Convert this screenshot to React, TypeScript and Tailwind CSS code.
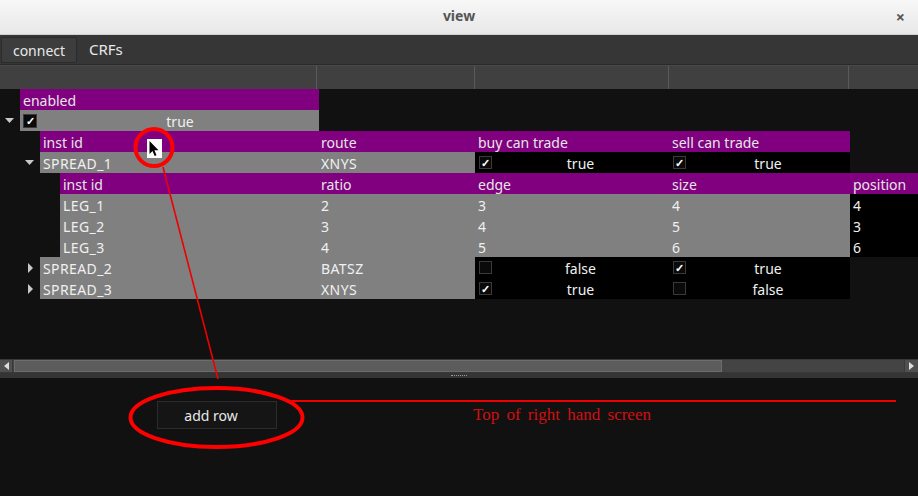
import React from "react";

const font = { fontFamily: '"Noto Sans", "Open Sans", sans-serif' };

const Arrow = ({ open }: { open: boolean }) =>
  open ? (
    <svg width="9" height="6" viewBox="0 0 9 6">
      <polygon points="0,0 9,0 4.5,5" fill="#c8c8c8" />
    </svg>
  ) : (
    <svg width="6" height="10" viewBox="0 0 6 10">
      <polygon points="0,0 5,5 0,10" fill="#c8c8c8" />
    </svg>
  );

const Check = ({ on, size = 13 }: { on: boolean; size?: number }) => (
  <div
    className="shrink-0 flex items-center justify-center bg-[#0a0a0a] border border-[#3a3a3a] text-white text-[11px] font-bold leading-none"
    style={{ width: size, height: size }}
  >
    {on ? "✓" : ""}
  </div>
);

const Head = ({ w, children }: { w: number; children: React.ReactNode }) => (
  <div
    className="h-full bg-[#800080] text-[#e6e6e6] pl-[3px] pt-[1px] flex items-center shrink-0"
    style={{ width: w }}
  >
    {children}
  </div>
);

const Cell = ({ w, children, dark }: { w: number; children?: React.ReactNode; dark?: boolean }) => (
  <div
    className={`h-full pl-[3px] pt-[2px] flex items-center shrink-0 text-[#f0f0f0] tracking-[0.4px] ${dark ? "bg-black" : "bg-[#808080]"}`}
    style={{ width: w }}
  >
    {children}
  </div>
);

const Bool = ({ w, on }: { w: number; on: boolean }) => (
  <div className="h-full bg-black flex items-center pl-[4px] shrink-0" style={{ width: w }}>
    <Check on={on} />
    <span className="flex-1 text-center text-[#f0f0f0] pt-[2px]">{on ? "true" : "false"}</span>
  </div>
);

const Row = ({ indent, arrow, children }: { indent: number; arrow?: "open" | "closed"; children: React.ReactNode }) => (
  <div className="h-[21px] flex">
    <div className="shrink-0 h-full flex items-center justify-end pr-[6px]" style={{ width: indent }}>
      {arrow && <Arrow open={arrow === "open"} />}
    </div>
    {children}
  </div>
);

const legs = [
  ["LEG_1", "2", "3", "4", "4"],
  ["LEG_2", "3", "4", "5", "3"],
  ["LEG_3", "4", "5", "6", "6"],
];

export default function App() {
  return (
    <div className="relative w-[918px] h-[496px] flex flex-col bg-[#111111] overflow-hidden text-[14px]" style={font}>
      {/* title bar */}
      <div className="h-[35px] shrink-0 bg-gradient-to-b from-[#f7f7f7] to-[#e8e8e8] border-b border-[#d0d0d0] flex items-center justify-center relative pb-[3px]">
        <span className="font-bold text-[#555] text-[14px]">view</span>
        <span className="absolute right-[13px] top-[5px] text-[#555] font-bold text-[16px]">×</span>
      </div>

      {/* toolbar */}
      <div className="h-[30px] shrink-0 bg-[#363636] flex items-center border-b border-[#2a2a2a]">
        <button className="ml-[1px] h-[26px] w-[76px] bg-[#3d3d3d] border border-[#2b2b2b] rounded-[2px] text-[14px] text-[#e8e8e8] pt-[2px]">
          connect
        </button>
        <span className="ml-[12px] text-[15px] text-[#e8e8e8]">CRFs</span>
      </div>

      {/* column header */}
      <div className="h-[24px] shrink-0 bg-[#404040] border-t border-[#4a4a4a] flex">
        <div className="w-[317px] h-full border-r border-[#5a5a5a]" />
        <div className="w-[158px] h-full border-r border-[#5a5a5a]" />
        <div className="w-[194px] h-full border-r border-[#5a5a5a]" />
        <div className="w-[180px] h-full border-r border-[#5a5a5a]" />
        <div className="flex-1" />
      </div>

      {/* tree */}
      <div className="h-[270px] shrink-0 overflow-hidden">
        <Row indent={20}>
          <Head w={299}>enabled</Head>
        </Row>
        <Row indent={20} arrow="open">
          <div className="w-[299px] h-full bg-[#808080] flex items-center pl-[3px]">
            <Check on size={14} />
            <span className="flex-1 text-center text-[#f0f0f0] pt-[2px] pl-[4px]">true</span>
          </div>
        </Row>
        <Row indent={40}>
          <Head w={278}>inst id</Head>
          <Head w={157}>route</Head>
          <Head w={194}>buy can trade</Head>
          <Head w={181}>sell can trade</Head>
        </Row>
        <Row indent={40} arrow="open">
          <Cell w={278}>SPREAD_1</Cell>
          <Cell w={157}>XNYS</Cell>
          <Bool w={194} on />
          <Bool w={181} on />
        </Row>
        <Row indent={60}>
          <Head w={258}>inst id</Head>
          <Head w={157}>ratio</Head>
          <Head w={194}>edge</Head>
          <Head w={181}>size</Head>
          <Head w={68}>position</Head>
        </Row>
        {legs.map((l) => (
          <Row indent={60} key={l[0]}>
            <Cell w={258}>{l[0]}</Cell>
            <Cell w={157}>{l[1]}</Cell>
            <Cell w={194}>{l[2]}</Cell>
            <Cell w={181}>{l[3]}</Cell>
            <Cell w={68} dark>
              {l[4]}
            </Cell>
          </Row>
        ))}
        <Row indent={40} arrow="closed">
          <Cell w={278}>SPREAD_2</Cell>
          <Cell w={157}>BATSZ</Cell>
          <Bool w={194} on={false} />
          <Bool w={181} on />
        </Row>
        <Row indent={40} arrow="closed">
          <Cell w={278}>SPREAD_3</Cell>
          <Cell w={157}>XNYS</Cell>
          <Bool w={194} on />
          <Bool w={181} on={false} />
        </Row>
      </div>

      {/* horizontal scrollbar */}
      <div className="h-[14px] shrink-0 bg-[#444] border-y border-[#383838] flex items-stretch">
        <div className="w-[13px] bg-[#505050] border-r border-[#3a3a3a] flex items-center justify-center">
          <svg width="5" height="8" viewBox="0 0 5 8">
            <polygon points="5,0 0,4 5,8" fill="#ddd" />
          </svg>
        </div>
        <div className="w-[708px] ml-[1px] bg-[#5c5c5c] border border-[#6c6c6c]" />
        <div className="flex-1" />
        <div className="w-[14px] bg-[#505050] border-l border-[#3a3a3a] flex items-center justify-center">
          <svg width="5" height="8" viewBox="0 0 5 8">
            <polygon points="0,0 5,4 0,8" fill="#ddd" />
          </svg>
        </div>
      </div>
      {/* splitter */}
      <div className="h-[5px] shrink-0 bg-[#353535] flex items-center justify-center">
        <span className="w-[16px] h-[1px] border-t border-dotted border-[#999]" />
      </div>

      {/* bottom pane */}
      <div className="flex-1 relative">
        <button className="ml-[157px] mt-[23px] w-[120px] h-[28px] bg-[#151515] border border-[#2c2c2c] text-[#e8e8e8] text-[14px] pr-[12px] pt-[1px]">
          add row
        </button>
      </div>

      {/* annotations */}
      <svg className="absolute inset-0 pointer-events-none" width="918" height="496" viewBox="0 0 918 496">
        <rect x="147" y="139" width="15" height="19" fill="#fff" />
        <path d="M149.5 141 L149.5 154 L152.5 151 L154.7 156 L156.5 155.2 L154.4 150.3 L158.5 150.3 Z" fill="#000" />
        <circle cx="154" cy="147.5" r="18.5" fill="none" stroke="#f00" strokeWidth="4" />
        <line x1="163" y1="167" x2="218" y2="379" stroke="#e00" strokeWidth="1.6" />
        <ellipse cx="216.5" cy="417.5" rx="86" ry="29.5" fill="none" stroke="#f00" strokeWidth="4" />
        <line x1="290" y1="401" x2="896" y2="401" stroke="#e00" strokeWidth="2" />
      </svg>
      <span
        className="absolute left-[473px] top-[402px] text-[17px] text-[#d01010] [word-spacing:3px]"
        style={{ fontFamily: '"Liberation Serif", serif' }}
      >
        Top of right hand screen
      </span>
    </div>
  );
}
